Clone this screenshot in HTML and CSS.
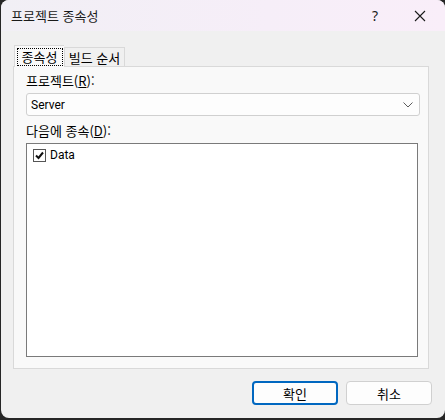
FILE: index.html
```html
<!DOCTYPE html>
<html lang="ko">
<head>
<meta charset="utf-8">
<link rel="stylesheet" href="styles.css">
</head>
<body>
<div class="window">
  <div class="titlebar">
    <div class="title">프로젝트 종속성</div>
    <div class="tb-btn help">?</div>
    <div class="tb-btn close">
      <svg width="12" height="12" viewBox="0 0 12 12"><path d="M1 1 L11 11 M11 1 L1 11" stroke="#1a1a1a" stroke-width="1.1" fill="none"/></svg>
    </div>
  </div>
  <div class="content">
    <div class="tabs">
      <div class="tab active"><span class="focus">종속성</span></div>
      <div class="tab second-tab">빌드 순서</div>
    </div>
    <div class="panel">
      <div class="label">프로젝트(<u>R</u>):</div>
      <div class="combo">
        <span class="latin">Server</span>
        <svg width="10" height="6" viewBox="0 0 10 6"><path d="M0.5 0.5 L5 5 L9.5 0.5" stroke="#5c5c5c" stroke-width="1" fill="none"/></svg>
      </div>
      <div class="label second">다음에 종속(<u>D</u>):</div>
      <div class="listbox">
        <div class="item">
          <span class="check"><svg width="11" height="11" viewBox="0 0 11 11"><path d="M2 5.5 L4.5 8 L9 2.5" stroke="#111" stroke-width="2" fill="none"/></svg></span>
          <span class="latin">Data</span>
        </div>
      </div>
    </div>
    <div class="buttons">
      <div class="btn default">확인</div>
      <div class="btn">취소</div>
    </div>
  </div>
</div>
</body>
</html>
```
FILE: styles.css
```css
* { box-sizing: border-box; }
html, body { margin: 0; padding: 0; }
body {
  width: 445px;
  height: 420px;
  background: #262626;
  font-family: "Noto Sans CJK KR", sans-serif;
  font-size: 13px;
  color: #000;
  overflow: hidden;
}
.latin {
  font-family: Roboto, "Noto Sans", sans-serif;
  font-size: 12px;
}
.window {
  margin-left: 1px;
  width: 444px;
  height: 418px;
  border-radius: 8px;
  background: #f0f0f0;
  overflow: hidden;
  display: flex;
  flex-direction: column;
}
.titlebar {
  height: 31px;
  flex: none;
  display: flex;
  align-items: center;
  background: linear-gradient(90deg, #f1eff5 0%, #f6eef8 60%, #f9eef9 100%);
  padding-left: 10px;
}
.title {
  flex: 1;
  font-size: 13px;
  color: #1a1a1a;
}
.tb-btn {
  width: 46px;
  height: 31px;
  display: flex;
  align-items: center;
  justify-content: center;
}
.help {
  font-family: "Noto Sans", sans-serif;
  font-size: 14px;
  color: #1a1a1a;
  padding-left: 6px;
}
.close { width: 50px; }
.content {
  flex: 1;
  padding: 14px 13px 0 12px;
  display: flex;
  flex-direction: column;
}
.tabs {
  display: flex;
  align-items: flex-end;
  height: 21px;
  padding-left: 1px;
  position: relative;
  z-index: 1;
}
.tab {
  height: 19px;
  border: 1px solid #d9d9d9;
  border-bottom: none;
  background: #f0f0f0;
  display: flex;
  align-items: center;
  justify-content: center;
  color: #000;
}
.second-tab { width: 61px; }
.tab.active {
  width: 50px;
  height: 22px;
  margin-bottom: -1px;
  background: #f9f9f9;
  padding: 0 1px;
  border-right: none;
}
.focus {
  border: 1px dotted #000;
  width: 46px;
  height: 18px;
  display: flex;
  align-items: center;
  justify-content: center;
}
.panel {
  width: 416px;
  height: 303px;
  border: 1px solid #d9d9d9;
  background: #f9f9f9;
  padding: 5px 0 0 12px;
}
.label {
  height: 17px;
  line-height: 17px;
}
.label.second { margin-top: 6px; }
u { text-decoration-thickness: 1px; text-underline-offset: 1px; }
.combo {
  margin-top: 4px;
  width: 394px;
  height: 23px;
  border: 1px solid #d0d0d0;
  border-radius: 3px;
  background: #fdfdfd;
  display: flex;
  align-items: center;
  justify-content: space-between;
  padding: 0 6px 0 4px;
}
.listbox {
  margin-top: 4px;
  width: 392px;
  height: 214px;
  border: 1px solid #7a7a7a;
  background: #fff;
  padding: 4px 0 0 6px;
}
.item {
  display: flex;
  align-items: center;
  gap: 4px;
  height: 14px;
}
.check {
  width: 13px;
  height: 13px;
  border: 1px solid #555;
  background: #fff;
  display: flex;
  align-items: center;
  justify-content: center;
}
.buttons {
  display: flex;
  justify-content: flex-end;
  gap: 8px;
  margin-top: 12px;
}
.btn {
  width: 86px;
  height: 24px;
  border: 1px solid #d0d0d0;
  border-radius: 4px;
  background: #fdfdfd;
  display: flex;
  align-items: center;
  justify-content: center;
}
.btn.default {
  border: 2px solid #0067c0;
}
```
